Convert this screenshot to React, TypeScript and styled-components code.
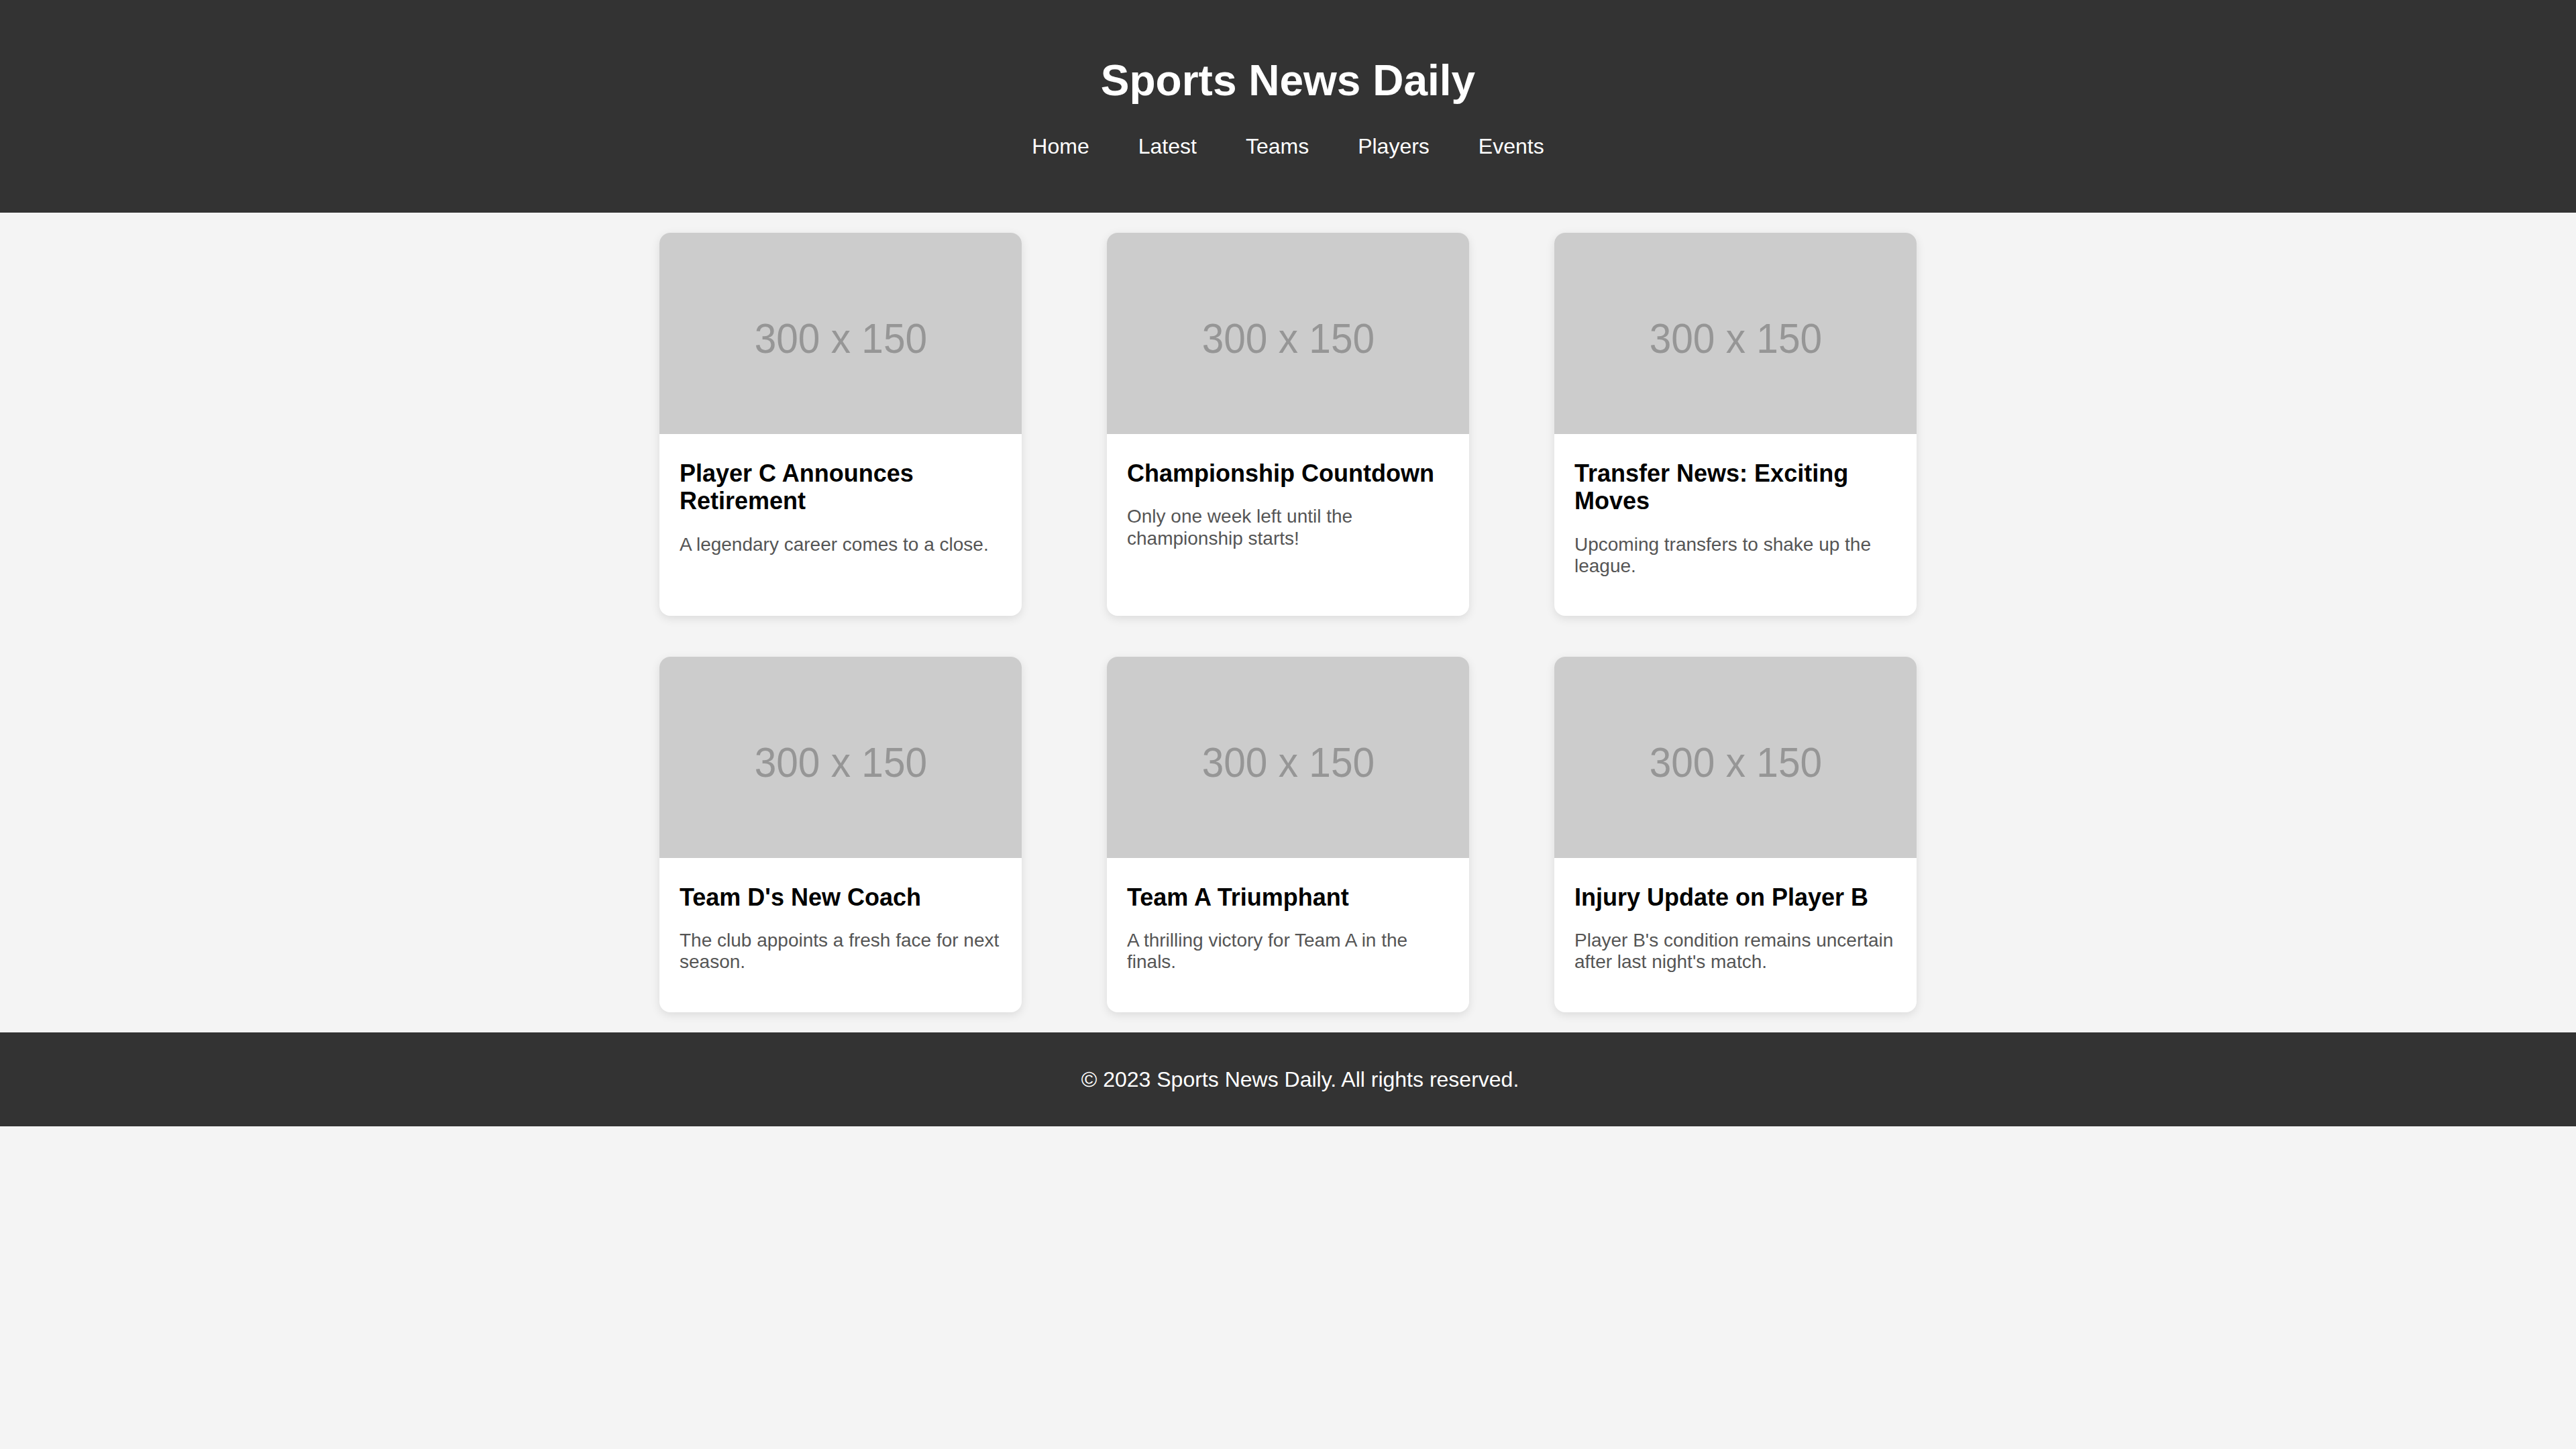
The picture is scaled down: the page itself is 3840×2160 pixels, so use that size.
import React from "react";
import styled, { createGlobalStyle } from "styled-components";

const GlobalStyle = createGlobalStyle`
  html, body {
    margin: 0;
    padding: 0;
  }
  body {
    background: #f4f4f4;
    font-family: "Liberation Sans", Arial, Helvetica, sans-serif;
    font-size: 32px;
    color: #000;
  }
`;

const Header = styled.header`
  background: #333333;
  color: #ffffff;
  text-align: center;
  padding: 40px 0 80.6px;
`;

const SiteTitle = styled.h1`
  margin: 44px 0 42px;
  font-size: 64px;
  line-height: 73.6px;
  font-weight: 700;
`;

const NavList = styled.ul`
  list-style: none;
  margin: 0;
  padding: 0;
  display: flex;
  justify-content: center;
  gap: 73px;
`;

const NavItem = styled.li`
  font-size: 32px;
  line-height: 36.8px;
`;

const NavLink = styled.a`
  color: #ffffff;
  text-decoration: none;
`;

const Grid = styled.main`
  display: grid;
  grid-template-columns: repeat(3, 540px);
  column-gap: 127px;
  row-gap: 60.5px;
  justify-content: center;
  padding: 30px 0 30px;
`;

const Card = styled.article`
  background: #ffffff;
  border-radius: 16px;
  overflow: hidden;
  box-shadow: 0 4px 14px rgba(0, 0, 0, 0.1);
  display: flex;
  flex-direction: column;
`;

const Placeholder = styled.div`
  height: 300px;
  background: #cccccc;
  display: flex;
  align-items: center;
  justify-content: center;
  padding-top: 14px;
  box-sizing: border-box;
`;

const PlaceholderText = styled.span`
  font-family: "Liberation Sans", Arial, sans-serif;
  font-size: 63px;
  line-height: 72px;
  color: #969696;
  transform: scaleX(0.93);
  white-space: nowrap;
`;

const CardBody = styled.div`
  padding: 38px 30px 30px;
`;

const CardTitle = styled.h3`
  margin: 0 0 20px;
  font-size: 36px;
  line-height: 41.4px;
  font-weight: 700;
  color: #000;
`;

const CardText = styled.p`
  margin: 28px 0;
  font-size: 28px;
  line-height: 32.2px;
  color: #555555;
`;

const Footer = styled.footer`
  background: #333333;
  color: #ffffff;
  text-align: center;
  padding: 20px 0 20px 36px;
`;

const FooterText = styled.p`
  margin: 32px 0;
  font-size: 32px;
  line-height: 36.8px;
`;

const navItems = ["Home", "Latest", "Teams", "Players", "Events"];

const articles = [
  { title: "Player C Announces Retirement", text: "A legendary career comes to a close." },
  { title: "Championship Countdown", text: "Only one week left until the championship starts!" },
  { title: "Transfer News: Exciting Moves", text: "Upcoming transfers to shake up the league." },
  { title: "Team D's New Coach", text: "The club appoints a fresh face for next season." },
  { title: "Team A Triumphant", text: "A thrilling victory for Team A in the finals." },
  { title: "Injury Update on Player B", text: "Player B's condition remains uncertain after last night's match." },
];

export default function App() {
  return (
    <>
      <GlobalStyle />
      <Header>
        <SiteTitle>Sports News Daily</SiteTitle>
        <nav>
          <NavList>
            {navItems.map((item) => (
              <NavItem key={item}>
                <NavLink href="#">{item}</NavLink>
              </NavItem>
            ))}
          </NavList>
        </nav>
      </Header>
      <Grid>
        {articles.map((a) => (
          <Card key={a.title}>
            <Placeholder>
              <PlaceholderText>300 x 150</PlaceholderText>
            </Placeholder>
            <CardBody>
              <CardTitle>{a.title}</CardTitle>
              <CardText>{a.text}</CardText>
            </CardBody>
          </Card>
        ))}
      </Grid>
      <Footer>
        <FooterText>© 2023 Sports News Daily. All rights reserved.</FooterText>
      </Footer>
    </>
  );
}
